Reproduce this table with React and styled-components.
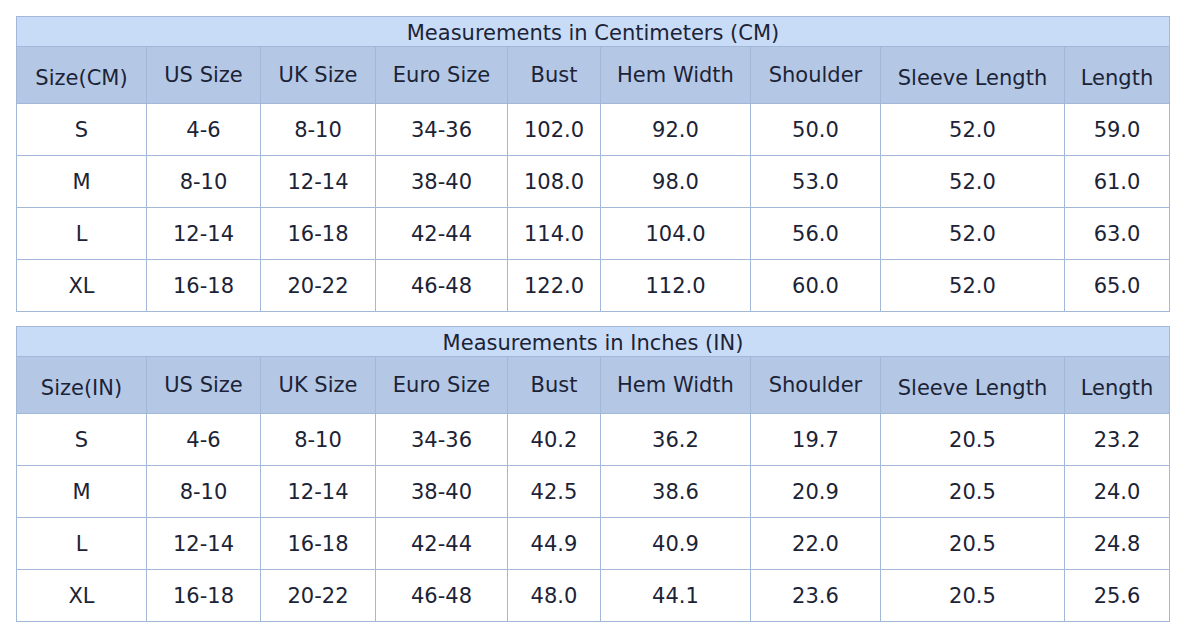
import React from 'react'
import styled, { createGlobalStyle } from 'styled-components'

const GlobalStyle = createGlobalStyle`
  html, body {
    margin: 0;
    padding: 0;
    background: #ffffff;
  }
  body {
    font-family: "DejaVu Sans", Verdana, sans-serif;
    color: #1c2336;
  }
`

const Page = styled.div`
  display: flex;
  flex-direction: column;
  gap: 14px;
  padding: 16px;
`

const Table = styled.table`
  width: 1153px;
  border-collapse: collapse;
  table-layout: fixed;
  font-size: 21px;
`

const Title = styled.th`
  height: 26px;
  padding: 3px 0 0;
  background: #c9dcf7;
  border: 1px solid #a3b8d8;
  font-weight: normal;
  line-height: 24px;
  text-align: center;
  vertical-align: middle;
`

const Head = styled.th`
  height: ${p => (p.$low ? '50px' : '56px')};
  padding: ${p => (p.$low ? '6px 0 0' : '0')};
  background: #b4c8e6;
  border: 1px solid #a3b8d8;
  font-weight: normal;
  text-align: center;
  vertical-align: middle;
  white-space: nowrap;
`

const Cell = styled.td`
  height: 51px;
  padding: 0;
  border: 1px solid #a3b8d8;
  text-align: center;
  vertical-align: middle;
`

const widths = [130, 114, 115, 132, 93, 150, 130, 184, 105]

const heads = [
  { label: 'US Size' },
  { label: 'UK Size' },
  { label: 'Euro Size' },
  { label: 'Bust' },
  { label: 'Hem Width' },
  { label: 'Shoulder' },
  { label: 'Sleeve Length', low: true },
  { label: 'Length', low: true },
]

const cmRows = [
  ['S', '4-6', '8-10', '34-36', '102.0', '92.0', '50.0', '52.0', '59.0'],
  ['M', '8-10', '12-14', '38-40', '108.0', '98.0', '53.0', '52.0', '61.0'],
  ['L', '12-14', '16-18', '42-44', '114.0', '104.0', '56.0', '52.0', '63.0'],
  ['XL', '16-18', '20-22', '46-48', '122.0', '112.0', '60.0', '52.0', '65.0'],
]

const inRows = [
  ['S', '4-6', '8-10', '34-36', '40.2', '36.2', '19.7', '20.5', '23.2'],
  ['M', '8-10', '12-14', '38-40', '42.5', '38.6', '20.9', '20.5', '24.0'],
  ['L', '12-14', '16-18', '42-44', '44.9', '40.9', '22.0', '20.5', '24.8'],
  ['XL', '16-18', '20-22', '46-48', '48.0', '44.1', '23.6', '20.5', '25.6'],
]

function SizeTable({ title, firstHead, rows }) {
  return (
    <Table>
      <colgroup>
        {widths.map((w, i) => (
          <col key={i} style={{ width: w }} />
        ))}
      </colgroup>
      <thead>
        <tr>
          <Title colSpan={9}>{title}</Title>
        </tr>
        <tr>
          <Head $low>{firstHead}</Head>
          {heads.map(h => (
            <Head key={h.label} $low={h.low}>{h.label}</Head>
          ))}
        </tr>
      </thead>
      <tbody>
        {rows.map(r => (
          <tr key={r[0]}>
            {r.map((v, i) => (
              <Cell key={i}>{v}</Cell>
            ))}
          </tr>
        ))}
      </tbody>
    </Table>
  )
}

export default function App() {
  return (
    <>
      <GlobalStyle />
      <Page>
        <SizeTable title="Measurements in Centimeters (CM)" firstHead="Size(CM)" rows={cmRows} />
        <SizeTable title="Measurements in Inches (IN)" firstHead="Size(IN)" rows={inRows} />
      </Page>
    </>
  )
}
